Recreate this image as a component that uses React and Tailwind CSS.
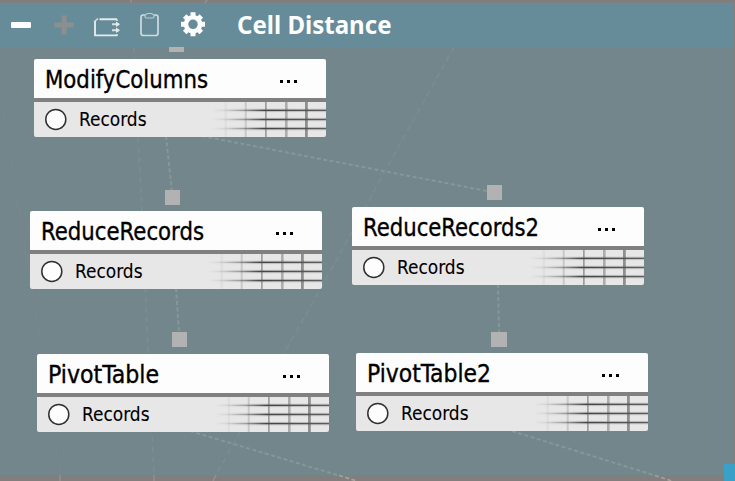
import React from "react";

const TITLE_FONT = "font-['DejaVu_Sans_Condensed','DejaVu_Sans',sans-serif]";

const nodes = [
  { name: "ModifyColumns", place: "left-[34px] top-[59px]", width: 164 },
  { name: "ReduceRecords", place: "left-[30px] top-[211px]", width: 164 },
  { name: "ReduceRecords2", place: "left-[352px] top-[206.5px]", width: 177 },
  { name: "PivotTable", place: "left-[37px] top-[353.5px]", width: 112 },
  { name: "PivotTable2", place: "left-[356px] top-[353px]", width: 125 },
];

const ports = [
  "left-[169px] top-[37px] w-[15px]",
  "left-[165px] top-[190px] w-[15px]",
  "left-[487px] top-[185px] w-[15px]",
  "left-[172px] top-[332px] w-[15px]",
  "left-[491px] top-[332px] w-[16px]",
];

function Links() {
  return (
    <svg className="absolute inset-0" width="735" height="481" fill="none">
      <g stroke="#84989a" strokeWidth="2" strokeDasharray="4 2.5">
        <path d="M202 136L487 191" />
        <path d="M166 136L172 192M176 288L179 333M498 284L499 333" />
        <path d="M190 431L339 475.5M512 431L655 475.5" />
      </g>
      <g stroke="#7b8d92" strokeWidth="1.6" strokeDasharray="6 4">
        <path d="M134 47L138 138L142 211L148 353L154 475" />
        <path d="M454 47L384 173L320 290L284 353L216 475" />
      </g>
      <path d="M0 92L18 207L37 320L60 475" stroke="#7b868b" strokeWidth="1.6" strokeDasharray="6 4" />
      <path d="M339 475.5L357 481M655 475.5L672 481" stroke="#a4a19c" strokeWidth="1.8" strokeDasharray="4 2.5" />
      <path d="M60 475V481M154 475V481M216 475L213 481M131 0V3M207 0L205 3" stroke="#94908e" strokeWidth="1.5" />
    </svg>
  );
}

function Grid() {
  return (
    <svg className="ml-auto block shrink-0" width="114" height="35">
      <defs>
        <linearGradient id="fade" gradientUnits="userSpaceOnUse" x1="0" x2="114" y1="0" y2="0">
          <stop offset="0" stopColor="#444" stopOpacity="0" />
          <stop offset="0.12" stopColor="#444" stopOpacity="0.1" />
          <stop offset="0.28" stopColor="#444" stopOpacity="0.4" />
          <stop offset="0.46" stopColor="#333" stopOpacity="0.88" />
          <stop offset="1" stopColor="#444" stopOpacity="0.8" />
        </linearGradient>
      </defs>
      <g fill="url(#fade)">
        <rect y="7.7" width="114" height="1.3" />
        <rect y="16.8" width="114" height="1.3" />
        <rect y="25.9" width="114" height="1.3" />
      </g>
      <g fill="url(#fade)" opacity="0.25">
        <rect y="6.7" width="114" height="3.4" />
        <rect y="15.8" width="114" height="3.4" />
        <rect y="24.9" width="114" height="3.4" />
      </g>
      <g fill="#555">
        <rect x="12.5" width="2.5" height="35" opacity=".05" />
        <rect x="32.7" width="2" height="35" opacity=".2" />
        <rect x="53" width="1.7" height="35" opacity=".5" />
        <rect x="73" width="2.6" height="35" opacity=".4" />
        <rect x="93" width="2.8" height="35" opacity=".6" />
      </g>
    </svg>
  );
}

function Label({ width, size, baseline, weight, children }) {
  return (
    <svg className="block shrink-0 overflow-visible" width={width} height={baseline + 6}>
      <text className={TITLE_FONT} x="0" y={baseline} fontSize={size} textLength={width} lengthAdjust="spacingAndGlyphs" fill="#000" stroke="#000" strokeWidth={weight}>
        {children}
      </text>
    </svg>
  );
}

function Node({ node }) {
  return (
    <section className={"absolute flex h-[78px] w-[292px] flex-col gap-1 overflow-hidden rounded-[2px] bg-[#808080] " + node.place}>
      <header className="flex h-[39px] shrink-0 items-start justify-between bg-[#fdfdfd] pl-[11px] pr-[29px]">
        <Label width={node.width - 1} size={24.3} baseline={29} weight={0.35}>{node.name}</Label>
        <span className="flex gap-[4px] pt-[21px]">
          <i className="h-[3px] w-[3px] bg-black" />
          <i className="h-[3px] w-[3px] bg-black" />
          <i className="h-[3px] w-[3px] bg-black" />
        </span>
      </header>
      <div className="flex h-[35px] shrink-0 items-start bg-[#e7e7e7] pl-[11px]">
        <svg className="mt-[6px] block shrink-0" width="22" height="23">
          <circle cx="10.8" cy="11.4" r="10" fill="#fdfdfd" stroke="#303030" strokeWidth="1.5" />
        </svg>
        <div className="ml-[12px]">
          <Label width={67.5} size={19} baseline={24} weight={0.1}>Records</Label>
        </div>
        <Grid />
      </div>
    </section>
  );
}

function Toolbar() {
  return (
    <header className="relative flex h-[44px] w-[734px] items-start bg-[#668b99]">
      <svg className="block shrink-0" width="237" height="44" fill="none">
        <rect x="11" y="19" width="20" height="6" rx="1" fill="#fdfdfd" />
        <path d="M54.5 22H73.7M64.1 12.5V31.5" stroke="#8c8f91" strokeWidth="5" />
        <g stroke="#d6e0e4" strokeWidth="1.6">
          <path d="M99.5 16.2H117M95 18V32.4H117.5" stroke="#e3eaed" strokeWidth="1.9" />
          <path d="M98 15.5L94 19" />
          <path d="M117 16.2V18M117 31V32.5" />
          <path d="M112 21.2H119M112 27.3H119" strokeWidth="2" />
        </g>
        <path d="M116 18.5L120 21.2L116 24ZM116 24.6L120 27.3L116 30Z" fill="#e3eaed" />
        <path d="M145 12H143Q141 12 141 14.5V30Q141 32.5 143.5 32.5H155.5Q158 32.5 158 30V14.5Q158 12 156 12H154" stroke="#cfdbe0" strokeWidth="1.7" />
        <path d="M145 13.5Q145 15 146.5 15H152.5Q154 15 154 13.5V12L151.5 10.5H147.5L145 12Z" stroke="#bdcdd3" strokeWidth="1.2" />
        <g transform="translate(193 21.3)">
          <g stroke="#fdfdfd" strokeWidth="5">
            <path d="M0 -12V-7M0 7V12M-12 0H-7M7 0H12" />
            <path d="M-8.3 -8.3L-5 -5M8.3 -8.3L5 -5M-8.3 8.3L-5 5M8.3 8.3L5 5" />
          </g>
          <circle r="7" stroke="#fdfdfd" strokeWidth="4.5" />
        </g>
      </svg>
      <svg className="block overflow-visible" width="154" height="44">
        <text className="font-['Noto_Sans',sans-serif] font-bold" x="0" y="31" fontSize="24.3" textLength="154.5" lengthAdjust="spacingAndGlyphs" fill="#fdfdfd">
          Cell Distance
        </text>
      </svg>
    </header>
  );
}

export default function App() {
  return (
    <main className="relative flex h-[481px] w-[735px] flex-col overflow-hidden bg-[#817f7e] pt-[3px]">
      <div className="mt-[44px] h-[428px] w-[734px] shrink-0 bg-[#73868b]" />
      <Links />
      {ports.map((p) => (
        <div key={p} className={"absolute h-[15px] bg-[#b3b2b2] " + p} />
      ))}
      {nodes.map((n) => (
        <Node key={n.name} node={n} />
      ))}
      <div className="absolute left-0 top-[3px]">
        <Toolbar />
      </div>
      <div className="absolute bottom-0 right-0 h-[17px] w-[11px] bg-[#39a0c8]" />
    </main>
  );
}
